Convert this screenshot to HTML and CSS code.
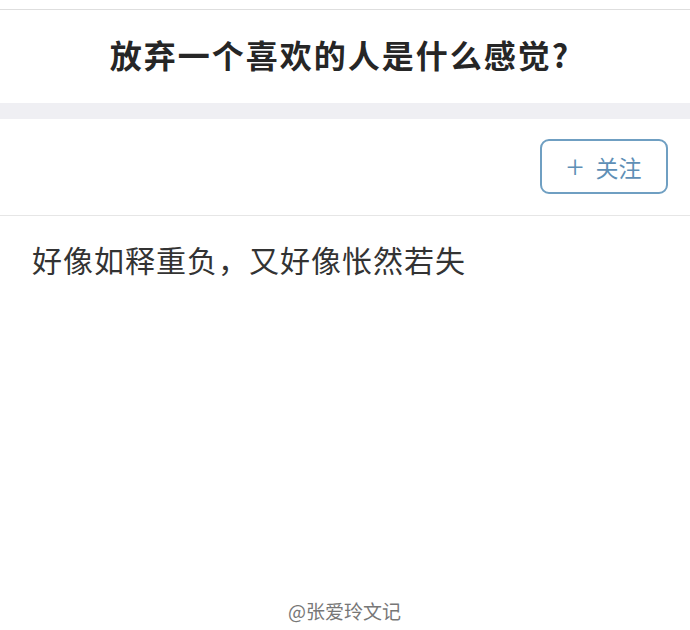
FILE: index.html
```html
<!DOCTYPE html>
<html lang="zh-CN">
  <head>
    <meta charset="UTF-8" />
    <title>放弃一个喜欢的人是什么感觉？</title>
    <link rel="stylesheet" href="styles.css">
  </head>
  <body>
    <div class="page">
      <div class="question">
        <h1 class="title">放弃一个喜欢的人是什么感觉?</h1>
      </div>
      <div class="band"></div>
      <div class="author-row">
        <div class="avatar"></div>
        <button class="follow-btn"><span class="plus">+</span>关注</button>
      </div>
      <div class="answer">
        <p>好像如释重负，又好像怅然若失</p>
      </div>
      <div class="watermark">@张爱玲文记</div>
    </div>
  </body>
</html>
```

FILE: styles.css
```css
body {
  margin: 0;
  background: #fff;
  font-family: "Noto Sans CJK SC", "Noto Sans", sans-serif;
  color: #333;
}

.page {
  width: 690px;
  height: 630px;
  display: flex;
  flex-direction: column;
  overflow: hidden;
}

.question {
  margin-top: 9px;
  border-top: 1px solid #dedede;
  height: 93px;
  display: flex;
  justify-content: center;
  align-items: center;
}

.title {
  margin: 0 0 6px;
  font-size: 32px;
  font-weight: bold;
  color: #262626;
  letter-spacing: 2px;
  padding-right: 10px;
}

.band {
  height: 16px;
  background: #efeff3;
}

.author-row {
  height: 96px;
  display: flex;
  justify-content: space-between;
  align-items: center;
  padding: 0 22px 0 20px;
  border-bottom: 1px solid #e6e6e6;
}

.avatar {
  width: 56px;
  height: 56px;
}

.follow-btn {
  width: 128px;
  height: 55px;
  margin-top: -1px;
  border: 2px solid #6f9fc2;
  border-radius: 9px;
  background: #fff;
  color: #5e8fb6;
  font-family: "Noto Sans CJK SC", sans-serif;
  font-size: 23px;
  display: flex;
  align-items: center;
  justify-content: center;
  gap: 12px;
  padding: 0;
}

.plus {
  font-size: 32px;
  font-weight: 300;
  line-height: 1;
  margin-top: -3px;
}

.answer {
  padding: 0 32px;
}

.answer p {
  margin: 21px 0 0;
  font-size: 30px;
  color: #333;
  letter-spacing: 1px;
}

.watermark {
  margin-top: auto;
  margin-bottom: 6px;
  padding-left: 288px;
  font-size: 19px;
  color: #777;
}
```
